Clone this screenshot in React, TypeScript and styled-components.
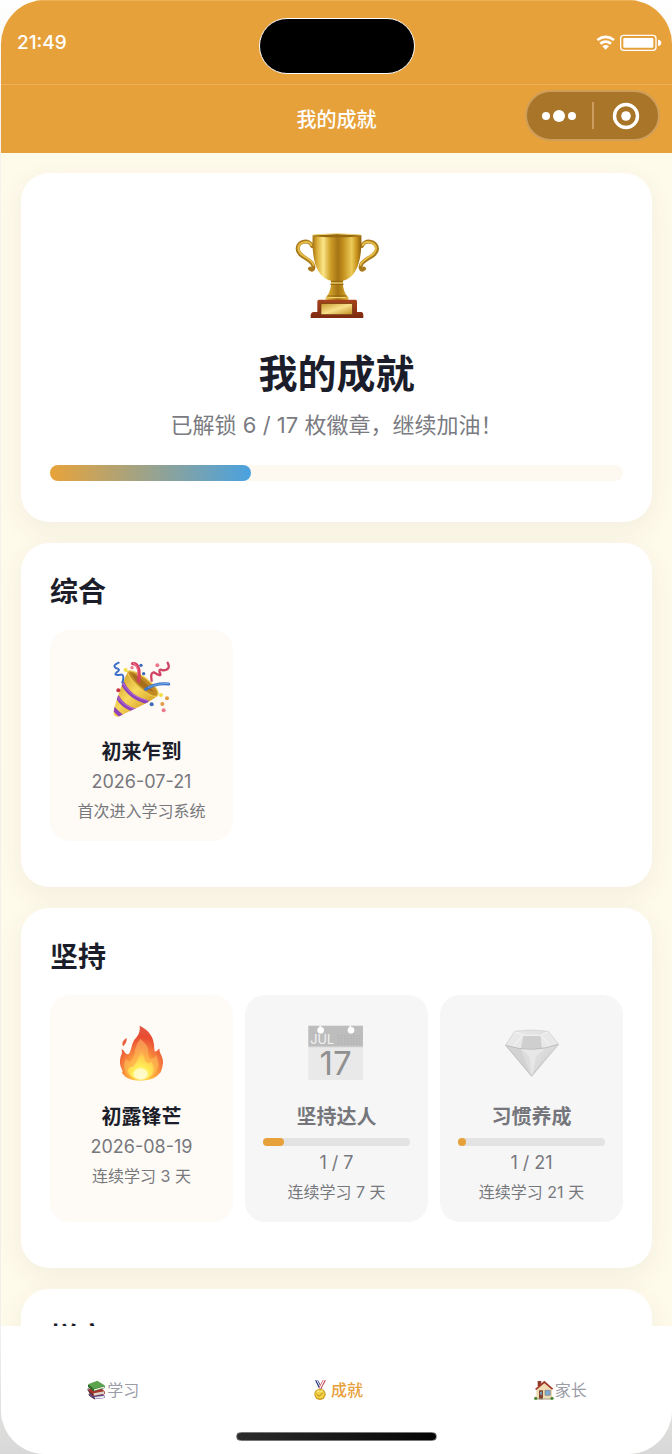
import React from 'react';
import styled, { createGlobalStyle } from 'styled-components';

const GlobalStyle = createGlobalStyle`
  * { box-sizing: border-box; }
  body {
    margin: 0;
    background: linear-gradient(#ffffff 0%, #f4f3f0 6%, #f0efec 92%, #d8d8d8 100%);
    font-family: Inter, 'Noto Sans CJK SC', sans-serif;
    color: #1b1e2a;
  }
  h1, h2, h3, p, ul { margin: 0; padding: 0; }
  button { font: inherit; border: 0; padding: 0; background: none; color: inherit; cursor: pointer; }
`;

const Phone = styled.div`
  display: flex;
  flex-direction: column;
  height: 100vh;
  margin-left: 1px;
  overflow: hidden;
  border-radius: 44px;
  background: #fffbeb;
`;

const StatusBar = styled.div`
  flex: none;
  display: grid;
  grid-template-columns: 1fr auto 1fr;
  align-items: center;
  height: 85px;
  padding: 0 10px 0 10px;
  background: #e7a13b;
  border-top: 1px solid #ecb057;
  border-bottom: 1px solid #efb056;
  color: #fff;
`;

const Time = styled.time`
  padding-left: 6px;
  font-size: 19px;
  line-height: 24px;
  font-weight: 500;
`;

const Island = styled.div`
  width: 156px;
  height: 56px;
  margin-top: 6px;
  border: 1px solid #fff;
  border-radius: 28px;
  background: #000;
`;

const StatusIcons = styled.svg`
  justify-self: end;
  width: 66px;
  height: 18px;
`;

const NavBar = styled.header`
  flex: none;
  display: grid;
  grid-template-columns: 1fr auto 1fr;
  align-items: start;
  height: 68px;
  padding: 5px 12px 0;
  background: #e7a13b;
  color: #fff;
`;

const NavTitle = styled.h1`
  grid-column: 2;
  font-size: 20px;
  line-height: 60px;
  font-weight: 500;
`;

const Capsule = styled.div`
  justify-self: end;
  display: flex;
  align-items: center;
  width: 135px;
  height: 51px;
  border: 2px solid #cf9f5a;
  border-radius: 26px;
  background: #a97529;
`;

const CapsuleButton = styled.button`
  flex: 1;
  display: flex;
  align-items: center;
  justify-content: center;
  height: 100%;
`;

const CapsuleDivider = styled.span`
  width: 2px;
  height: 27px;
  background: #cb9d5f;
`;

const Content = styled.main`
  flex: 1;
  min-height: 0;
  display: flex;
  flex-direction: column;
  gap: 21px;
  padding: 20px 20px 40px;
  overflow-y: auto;
  scrollbar-width: none;
`;

const Card = styled.section`
  flex: none;
  padding: 29px 29px 46px;
  border-radius: 28px;
  background: #fff;
  box-shadow: 0 8px 28px rgba(70, 50, 70, 0.07);
`;

const SummaryCard = styled(Card)`
  display: flex;
  flex-direction: column;
  align-items: center;
  padding: 60px 29px 41px;
`;

const SummaryTitle = styled.h2`
  margin-top: 26px;
  font-size: 39px;
  line-height: 56px;
  font-weight: 700;
`;

const SummaryText = styled.p`
  margin-top: 7px;
  font-size: 22px;
  line-height: 32px;
  color: #7a7b81;
`;

const Track = styled.div<{ $small?: boolean }>`
  align-self: stretch;
  height: ${p => (p.$small ? 8 : 16)}px;
  margin: ${p => (p.$small ? '4px 0' : '24px 0 0')};
  border-radius: 8px;
  background: ${p => (p.$small ? '#e3e3e3' : '#fdf8f0')};
`;

const Fill = styled.div<{ $small?: boolean }>`
  height: 100%;
  min-width: 8px;
  border-radius: 8px;
  background: ${p => (p.$small ? '#e7a13b' : 'linear-gradient(90deg, #e8a33a, #4aa2e0)')};
`;

const SectionTitle = styled.h2`
  margin-bottom: 18px;
  font-size: 28px;
  line-height: 40px;
  font-weight: 700;
`;

const BadgeGrid = styled.ul`
  display: grid;
  grid-template-columns: repeat(3, 1fr);
  gap: 12px;
  list-style: none;
`;

const BadgeCard = styled.li<{ $locked?: boolean }>`
  display: flex;
  flex-direction: column;
  align-items: center;
  padding: 30px 18px 18px;
  border-radius: 20px;
  background: ${p => (p.$locked ? '#f6f6f6' : '#fefaf5')};
  color: ${p => (p.$locked ? '#75767c' : '#1b1e2a')};
`;

const BadgeIcon = styled.svg`
  width: 58px;
  height: 58px;
`;

const BadgeName = styled.h3`
  margin: 19px 0 2px;
  font-size: 20px;
  line-height: 30px;
  font-weight: 700;
`;

const BadgeMeta = styled.p`
  font-size: 18px;
  line-height: 26px;
  color: #77787d;
`;

const BadgeDesc = styled.p`
  margin-top: 4px;
  font-size: 16px;
  line-height: 24px;
  color: #77787d;
  white-space: nowrap;
`;

const TabBar = styled.nav`
  flex: none;
  display: flex;
  flex-direction: column;
  align-items: center;
  padding: 52px 0 13px;
  background: #fff;
`;

const Tabs = styled.div`
  align-self: stretch;
  display: grid;
  grid-template-columns: repeat(3, 1fr);
`;

const Tab = styled.button<{ $active?: boolean }>`
  display: flex;
  align-items: center;
  justify-content: center;
  gap: 1px;
  font-size: 16px;
  line-height: 24px;
  font-weight: ${p => (p.$active ? 500 : 400)};
  color: ${p => (p.$active ? '#e7a13b' : '#9a9ca6')};
`;

const TabIcon = styled.svg`
  width: 20px;
  height: 20px;
`;

const HomeIndicator = styled.div`
  width: 30%;
  height: 9px;
  margin-top: 30px;
  border: 1px solid #777;
  border-radius: 5px;
  background: linear-gradient(90deg, #2c2c2c, #050505);
`;

const Trophy = () => (
  <svg width="85" height="87" viewBox="43 36 255 261" aria-hidden="true">
    <defs>
      <linearGradient id="cup" x1="0" x2="1">
        <stop offset="0" stopColor="#a87410" />
        <stop offset=".1" stopColor="#dcb03a" />
        <stop offset=".22" stopColor="#fbe68a" />
        <stop offset=".36" stopColor="#d0a02a" />
        <stop offset=".52" stopColor="#a57414" />
        <stop offset=".62" stopColor="#c08e1c" />
        <stop offset=".8" stopColor="#eccb58" />
        <stop offset=".9" stopColor="#c9951f" />
        <stop offset="1" stopColor="#8c5f0a" />
      </linearGradient>
      <linearGradient id="plate" x1="0" x2="1" y2="1">
        <stop offset="0" stopColor="#c9982f" />
        <stop offset=".5" stopColor="#f8e08a" />
        <stop offset="1" stopColor="#c08c22" />
      </linearGradient>
      <linearGradient id="wood" x2="0" y2="1">
        <stop offset="0" stopColor="#a8431d" />
        <stop offset="1" stopColor="#7e2a10" />
      </linearGradient>
    </defs>
    <g fill="none" strokeLinecap="round">
      <path d="M97 75C91 55 55 58 54 82C53 108 92 111 100 132C104 145 97 149 91 143M247 75C253 55 290 58 292 82C293 108 252 111 244 132C240 145 247 149 253 143" stroke="#a87a1c" strokeWidth="12" />
      <path d="M95 72C88 57 57 61 56 82C56 106 94 109 102 132M249 72C256 57 287 61 289 82C289 106 250 109 242 132" stroke="#e6bd48" strokeWidth="6" />
    </g>
    <path d="M99 44H245C247 100 239 168 189 180C190 201 193 216 206 229Q209 237 199 239H145Q134 237 138 229C151 216 154 201 155 180C104 168 96 100 99 44Z" fill="url(#cup)" />
    <ellipse cx="172" cy="44" rx="74" ry="5" fill="#96690f" />
    <path d="M100 42Q172 34 244 42" stroke="#eed271" strokeWidth="3" fill="none" />
    <path d="M154 181H190M152 190H192M143 225H201" stroke="#8f6414" strokeWidth="3" />
    <path d="M156 186H188M147 230H198" stroke="#f9de7b" strokeWidth="3" />
    <path d="M118 236H228Q232 236 232 242V273H246Q251 275 251 282V291H93V282Q94 275 100 273H113V242Q113 236 118 236Z" fill="url(#wood)" />
    <rect x="124" y="248" width="94" height="33" fill="url(#plate)" stroke="#71400c" strokeWidth="2" />
  </svg>
);

const Popper = () => (
  <BadgeIcon viewBox="68 60 174 174" aria-hidden="true">
    <defs>
      <linearGradient id="cone" x1="0" y1=".2" x2=".8" y2="1">
        <stop offset="0" stopColor="#c8941f" />
        <stop offset=".45" stopColor="#f7d95c" />
        <stop offset=".75" stopColor="#dba92c" />
        <stop offset="1" stopColor="#7e5116" />
      </linearGradient>
      <clipPath id="coneShape"><path d="M113 94C98 125 79 172 69 218Q70 231 84 230C127 210 172 190 201 169C210 151 148 91 113 94Z" /></clipPath>
    </defs>
    <g clipPath="url(#coneShape)">
      <rect x="60" y="80" width="160" height="160" fill="url(#cone)" />
      <path d="M95 126Q118 175 174 187M80 169Q98 202 137 212M66 202Q80 217 94 229" stroke="#8f43b8" strokeWidth="12" fill="none" />
      <path d="M95 124Q118 171 174 182M80 167Q98 198 137 208" stroke="#bb78d5" strokeWidth="3" fill="none" />
    </g>
    <path d="M112 94Q126 87 164 113Q211 149 202 166Q193 177 157 151Q112 114 112 94Z" fill="#c18a24" stroke="#efcb51" strokeWidth="4" />
    <path d="M121 98Q152 109 190 155Q160 151 137 124Z" fill="#a56d1c" />
    <g fill="none" strokeLinecap="round">
      <path d="M127 71Q151 69 145 123" stroke="#d83f60" strokeWidth="10" />
      <path d="M129 70Q145 75 142 105" stroke="#f3849a" strokeWidth="3" />
      <path d="M166 148Q196 128 235 132" stroke="#3b75ca" strokeWidth="9" />
      <path d="M174 142Q204 128 235 130" stroke="#75a6e7" strokeWidth="3" />
      <path d="M85 68Q66 76 76 84Q94 88 79 97Q68 108 91 104Q104 102 96 128" stroke="#3d70cb" strokeWidth="6" />
      <path d="M232 68Q243 89 218 91Q202 84 210 102Q213 111 190 97Q179 99 184 122" stroke="#cf4467" strokeWidth="7" />
    </g>
    <g fill="#ed788e"><circle cx="125" cy="83" r="5" /><circle cx="201" cy="76" r="6" /><circle cx="220" cy="211" r="6" /></g>
    <g fill="#3c68ba"><circle cx="152" cy="76" r="5" /><circle cx="160" cy="101" r="5" /><circle cx="184" cy="193" r="6" /></g>
    <g fill="#e69a43"><circle cx="216" cy="192" r="6" /><circle cx="230" cy="175" r="6" /></g>
    <g fill="#f2de43"><circle cx="106" cy="90" r="6" /><circle cx="212" cy="165" r="6" /></g>
    <circle cx="84" cy="151" r="6" fill="#c93346" />
  </BadgeIcon>
);

const Fire = () => (
  <BadgeIcon viewBox="220 135 174 174" aria-hidden="true">
    <defs>
      <radialGradient id="flame" cx=".5" cy=".9" r=".85">
        <stop offset="0" stopColor="#fff06a" />
        <stop offset=".3" stopColor="#ffb43b" />
        <stop offset=".58" stopColor="#f4793c" />
        <stop offset=".82" stopColor="#e94b30" />
        <stop offset="1" stopColor="#e2573f" />
      </radialGradient>
      <radialGradient id="inner" cx=".5" cy=".9" r=".9">
        <stop offset="0" stopColor="#fff27a" />
        <stop offset=".45" stopColor="#ffb648" />
        <stop offset="1" stopColor="#f48a55" />
      </radialGradient>
      <radialGradient id="core" cx=".5" cy=".85" r=".75">
        <stop offset="0" stopColor="#fffde0" />
        <stop offset=".4" stopColor="#ffee58" />
        <stop offset=".8" stopColor="#ffcf4e" />
        <stop offset="1" stopColor="#fbb052" />
      </radialGradient>
    </defs>
    <path d="M300 137C327 151 344 169 344 207Q344 217 350 214Q358 205 360 206C356 218 371 226 370 249Q368 267 363 277L351 289Q333 302 304 302Q273 302 257 290L246 278Q251 278 246 266C239 253 239 237 247 220L246 207Q252 210 257 219Q266 228 271 216C277 199 278 184 289 174Q303 158 300 137Z" fill="url(#flame)" />
    <path d="M261 174Q262 187 254 195Q249 203 248 192Q248 182 261 174Z" fill="#e96042" />
    <path d="M302 176C315 188 326 197 326 215Q324 235 336 237Q348 232 350 223C351 239 360 247 355 262Q348 291 305 298Q258 292 254 262Q252 248 260 235Q263 248 272 243Q286 231 286 209Q291 189 302 176Z" fill="url(#inner)" />
    <path d="M304 209Q315 225 316 244Q325 255 334 246Q343 255 342 269Q336 296 303 300Q271 297 264 270Q268 260 281 260Q295 243 304 209Z" fill="url(#core)" />
    <ellipse cx="303" cy="281" rx="22" ry="16" fill="#fffbd0" opacity=".8" />
  </BadgeIcon>
);

const Calendar = () => (
  <BadgeIcon viewBox="805 135 174 174" aria-hidden="true">
    <path d="M806 137H970V300H806Z" fill="#e9e9e9" />
    <path d="M806 137H970V200H806Z" fill="#bdbdbd" />
    <path d="M806 201H970" stroke="#d4d4d4" strokeWidth="2" />
    <path d="M842 137V150M932 137V150" stroke="#fff" strokeWidth="5" />
    <circle cx="843" cy="151" r="10" fill="#fff" />
    <circle cx="934" cy="151" r="10" fill="#fff" />
    <text x="812" y="192" fontFamily="Inter, sans-serif" fontSize="38" fill="#f3f3f3">JUL</text>
    <path d="M896 168H966M896 176H966M896 184H966M896 191H966" stroke="#a9a9a9" strokeWidth="3" strokeDasharray="3 6" />
    <text x="888" y="286" textAnchor="middle" fontFamily="Inter, sans-serif" fontSize="99" fontWeight="400" fill="#909090">17</text>
  </BadgeIcon>
);

const Diamond = () => (
  <BadgeIcon viewBox="490 135 174 174" aria-hidden="true">
    <defs>
      <linearGradient id="gem" x2="1" y2="1">
        <stop offset="0" stopColor="#e9e9e9" />
        <stop offset=".55" stopColor="#dedede" />
        <stop offset="1" stopColor="#c6c6c6" />
      </linearGradient>
    </defs>
    <path d="M525 154Q577 146 626 154L657 193L576 290L497 196Z" fill="url(#gem)" />
    <path d="M497 196L545 208L576 290Z" fill="#d3d3d3" />
    <path d="M545 208H615L576 290Z" fill="#e7e7e7" />
    <path d="M545 208L570 232L576 290ZM615 208L590 228L576 290Z" fill="#dcdcdc" />
    <path d="M550 166H603L607 207L544 205Z" fill="#cfcfcf" />
    <path d="M525 154L550 166L544 205L497 196ZM626 154L603 166L607 207L657 193Z" fill="#e8e8e8" />
    <path d="M525 154L550 166H603L626 154M550 166L521 198M603 166L633 198" fill="none" stroke="#f6f6f6" strokeWidth="3" />
    <path d="M497 196Q577 221 657 193" fill="none" stroke="#bdbdbd" strokeWidth="3" />
    <path d="M499 197L576 288L655 195" fill="none" stroke="#b8b8b8" strokeWidth="2" />
    <path d="M497 196L525 154Q577 146 626 154L657 193" fill="none" stroke="#cfcfcf" strokeWidth="2" />
  </BadgeIcon>
);

const Books = () => (
  <TabIcon viewBox="258 389 60 60" aria-hidden="true">
    <path d="M270 429L300 423L314 436V443L284 447L269 435Z" fill="#574485" />
    <path d="M284 440L313 436V442L284 445Z" fill="#eee" />
    <path d="M266 415L300 409L315 424V431L280 438L267 427Z" fill="#a5352b" />
    <path d="M281 429L313 423V430L281 436Z" fill="#ddd5cb" />
    <path d="M264 403V410L281 423L315 413V407Z" fill="#286b2c" />
    <path d="M282 417L314 408V412L282 421Z" fill="#e5e8d8" />
    <path d="M264 402L292 391L316 406L282 416Z" fill="#5ba34c" />
    <path d="M265 414Q261 418 268 425L281 435M268 429Q265 434 271 438L285 446" fill="none" stroke="#4b2740" strokeWidth="3" />
  </TabIcon>
);

const Medal = () => (
  <TabIcon viewBox="930 389 60 60" aria-hidden="true">
    <path d="M945 390H954L967 413L958 417Z" fill="#28397f" />
    <path d="M949 390H952L964 414H961Z" fill="#fff" />
    <path d="M978 390H968L956 413L963 417Z" fill="#c54650" />
    <path d="M974 390H970L957 415H961Z" fill="#fff" />
    <circle cx="960" cy="432" r="17" fill="#c9971d" />
    <circle cx="960" cy="431" r="14" fill="#f1d244" />
    <path d="M960 416V423M950 431L957 438L970 426" fill="none" stroke="#b98518" strokeWidth="3" />
    <path d="M951 425Q959 418 968 425" fill="none" stroke="#fff2a0" strokeWidth="3" />
  </TabIcon>
);

const House = () => (
  <TabIcon viewBox="594 389 60 60" aria-hidden="true">
    <path d="M605 392H616V407H605Z" fill="#923a2c" />
    <path d="M601 415L625 396L648 415V447H601Z" fill="#f0dcb4" />
    <path d="M597 416L625 391L652 415L648 418L625 399L601 419Z" fill="#a33b2d" />
    <path d="M609 420H621V447H609Z" fill="#81452b" />
    <path d="M612 424H618V433H612Z" fill="#7c9cb8" />
    <path d="M627 420H643V435H627Z" fill="#7cabd6" stroke="#8a8478" strokeWidth="2" />
    <path d="M601 446H648" stroke="#a79f8d" strokeWidth="3" />
    <circle cx="599" cy="444" r="5" fill="#4e8c36" />
    <circle cx="648" cy="444" r="5" fill="#4e8c36" />
  </TabIcon>
);

interface Badge {
  name: string;
  desc: string;
  icon: React.ReactNode;
  date?: string;
  current?: number;
  goal?: number;
}

const sections: { title: string; badges: Badge[] }[] = [
  {
    title: '综合',
    badges: [{ name: '初来乍到', date: '2026-07-21', desc: '首次进入学习系统', icon: <Popper /> }],
  },
  {
    title: '坚持',
    badges: [
      { name: '初露锋芒', date: '2026-08-19', desc: '连续学习 3 天', icon: <Fire /> },
      { name: '坚持达人', current: 1, goal: 7, desc: '连续学习 7 天', icon: <Calendar /> },
      { name: '习惯养成', current: 1, goal: 21, desc: '连续学习 21 天', icon: <Diamond /> },
    ],
  },
  { title: '拼音', badges: [] },
];

const BadgeItem = ({ badge }: { badge: Badge }) => {
  const { current, goal } = badge;
  const locked = current !== undefined && goal !== undefined;
  return (
    <BadgeCard $locked={locked}>
      {badge.icon}
      <BadgeName>{badge.name}</BadgeName>
      {locked && (
        <Track $small>
          <Fill $small style={{ width: `${(current / goal) * 100}%` }} />
        </Track>
      )}
      <BadgeMeta>{locked ? `${current} / ${goal}` : badge.date}</BadgeMeta>
      <BadgeDesc>{badge.desc}</BadgeDesc>
    </BadgeCard>
  );
};

export default function App() {
  const unlocked = 6;
  const total = 17;
  return (
    <>
      <GlobalStyle />
      <Phone>
        <StatusBar>
          <Time>21:49</Time>
          <Island />
          <StatusIcons viewBox="780 105 198 54" aria-hidden="true">
            <g fill="none" stroke="#fff" strokeWidth="8">
              <path d="M784 123Q809 104 834 123" />
              <path d="M793 134Q809 122 825 134" />
            </g>
            <path d="M799 142Q809 134 819 142L809 152Z" fill="#fff" />
            <rect x="854" y="109" width="106" height="45" rx="9" fill="none" stroke="#fff" strokeWidth="4" />
            <rect x="862" y="117" width="90" height="29" rx="3" fill="#fff" />
            <path d="M966 122Q976 123 976 131Q976 140 966 141Z" fill="#fff" />
          </StatusIcons>
        </StatusBar>
        <NavBar>
          <NavTitle>我的成就</NavTitle>
          <Capsule>
            <CapsuleButton aria-label="更多">
              <svg width="36" height="14" viewBox="0 0 36 14" fill="#fff">
                <circle cx="5" cy="7" r="4" />
                <circle cx="18" cy="7" r="6" />
                <circle cx="31" cy="7" r="4" />
              </svg>
            </CapsuleButton>
            <CapsuleDivider />
            <CapsuleButton aria-label="关闭">
              <svg width="28" height="28" viewBox="0 0 28 28">
                <circle cx="14" cy="14" r="11.5" fill="none" stroke="#fff" strokeWidth="3.4" />
                <circle cx="14" cy="14" r="4.8" fill="#fff" />
              </svg>
            </CapsuleButton>
          </Capsule>
        </NavBar>
        <Content>
          <SummaryCard>
            <Trophy />
            <SummaryTitle>我的成就</SummaryTitle>
            <SummaryText>已解锁 {unlocked} / {total} 枚徽章，继续加油！</SummaryText>
            <Track>
              <Fill style={{ width: `${Math.round((unlocked / total) * 100)}%` }} />
            </Track>
          </SummaryCard>
          {sections.map(section => (
            <Card key={section.title}>
              <SectionTitle>{section.title}</SectionTitle>
              <BadgeGrid>
                {section.badges.map(badge => (
                  <BadgeItem key={badge.name} badge={badge} />
                ))}
              </BadgeGrid>
            </Card>
          ))}
        </Content>
        <TabBar>
          <Tabs>
            <Tab><Books />学习</Tab>
            <Tab $active><Medal />成就</Tab>
            <Tab><House />家长</Tab>
          </Tabs>
          <HomeIndicator />
        </TabBar>
      </Phone>
    </>
  );
}
